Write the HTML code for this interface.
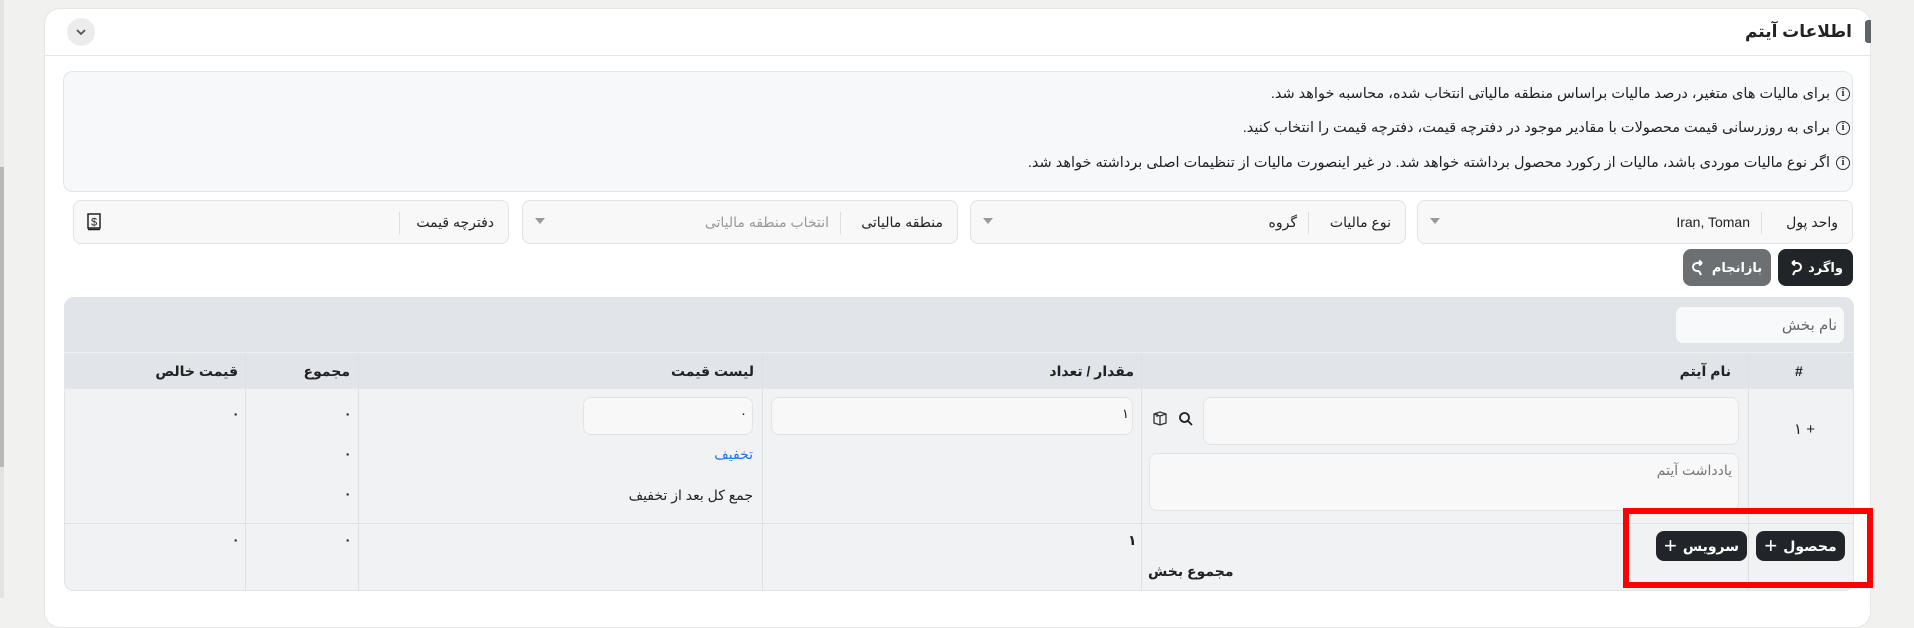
<!DOCTYPE html>
<html><head><meta charset="utf-8"><style>
*{box-sizing:border-box;margin:0;padding:0}
body{width:1914px;height:598px;background:#f1f1f0;font-family:"Liberation Sans","DejaVu Sans",sans-serif;color:#222;position:relative;overflow:hidden}
.a{position:absolute}
.card{left:44px;top:8px;width:1827px;height:620px;background:#fff;border-radius:16px;border:1px solid #e6e6e6}
.txt{direction:rtl;white-space:nowrap;font-size:14px}
.sel{position:absolute;top:200px;height:44px;background:#f8f8f8;border:1px solid #e2e2e2;border-radius:8px}
.sel .l{position:absolute;right:14px;top:13px;font-size:14px;direction:rtl;white-space:nowrap}
.sel .sep{position:absolute;top:11px;width:1px;height:22px;background:#ddd}
.sel .v{position:absolute;top:13px;font-size:14px;direction:rtl;white-space:nowrap}
.arr{position:absolute;left:12px;top:17px;width:0;height:0;border-left:5px solid transparent;border-right:5px solid transparent;border-top:6px solid #999}
.inp{position:absolute;background:#f8f8f8;border:1px solid #e3e3e3;border-radius:8px}
.hd{position:absolute;top:353px;height:36px;font-size:14px;font-weight:bold;direction:rtl;white-space:nowrap;line-height:36px}
.vl{position:absolute;width:1px;background:#dde0e4}
.btn{position:absolute;border-radius:8px;color:#fff;font-size:13px;font-weight:bold;direction:rtl;white-space:nowrap;display:flex;align-items:center;justify-content:center;gap:6px}
.info{position:absolute;right:64px;font-size:14.5px;direction:rtl;white-space:nowrap;display:flex;align-items:center;gap:6px}
.ic{width:14px;height:14px;border:1.3px solid #333;border-radius:50%;font-size:10px;line-height:12px;text-align:center;font-family:"Liberation Serif",serif;font-weight:bold}
</style></head><body>
<div class="a" style="left:0;top:0;width:4px;height:598px;background:#e4e4e4"></div>
<div class="a" style="left:0;top:167px;width:4px;height:300px;background:#b8b8b8"></div>
<div class="a card"></div>
<div class="a" style="left:44px;top:55px;width:1827px;height:1px;background:#e5e5e5"></div>
<div class="a" style="left:1865px;top:20px;width:6px;height:23px;background:#5f6466;border-radius:3px 0 0 3px"></div>
<div class="a txt" style="right:62px;top:22px;font-size:17px;font-weight:bold">اطلاعات آیتم</div>
<div class="a" style="left:67px;top:18px;width:28px;height:28px;border-radius:50%;background:#ececec"></div>
<svg class="a" style="left:74px;top:26px" width="14" height="12" viewBox="0 0 14 12"><path d="M3 4l4 4 4-4" stroke="#555" stroke-width="1.8" fill="none"/></svg>

<div class="a" style="left:63px;top:71px;width:1790px;height:121px;background:#f7f8f9;border:1px solid #e3e5e8;border-radius:10px"></div>
<div class="info" style="top:86px"><span class="ic">i</span><span>برای مالیات های متغیر، درصد مالیات براساس منطقه مالیاتی انتخاب شده، محاسبه خواهد شد.</span></div>
<div class="info" style="top:120px"><span class="ic">i</span><span>برای به روزرسانی قیمت محصولات با مقادیر موجود در دفترچه قیمت، دفترچه قیمت را انتخاب کنید.</span></div>
<div class="info" style="top:155px"><span class="ic">i</span><span>اگر نوع مالیات موردی باشد، مالیات از رکورد محصول برداشته خواهد شد. در غیر اینصورت مالیات از تنظیمات اصلی برداشته خواهد شد.</span></div>

<div class="sel" style="left:1417px;width:436px"><span class="l">واحد پول</span><span class="sep" style="right:90px"></span><span class="v" style="right:102px;font-family:'Liberation Sans',sans-serif">Iran, Toman</span><span class="arr"></span></div>
<div class="sel" style="left:970px;width:436px"><span class="l">نوع مالیات</span><span class="sep" style="right:96px"></span><span class="v" style="right:108px">گروه</span><span class="arr"></span></div>
<div class="sel" style="left:522px;width:436px"><span class="l">منطقه مالیاتی</span><span class="sep" style="right:116px"></span><span class="v" style="right:128px;color:#999">انتخاب منطقه مالیاتی</span><span class="arr"></span></div>
<div class="sel" style="left:73px;width:436px"><span class="l">دفترچه قیمت</span><span class="sep" style="right:108px"></span>
<svg style="position:absolute;left:13px;top:12px" width="14" height="18" viewBox="0 0 14 18"><rect x="1" y="1" width="12" height="14" fill="none" stroke="#222" stroke-width="1.5"/><line x1="1" y1="16.5" x2="13" y2="16.5" stroke="#222" stroke-width="1.5"/><text x="7" y="12.5" font-size="11" text-anchor="middle" font-family="Liberation Sans" fill="#222">$</text></svg></div>

<div class="btn" style="left:1778px;top:249px;width:75px;height:37px;background:#212529">واگرد <svg width="14" height="16" viewBox="0 0 14 16"><path d="M4 3h5a4 4 0 0 1 0 8H7M4 3l3-2.5M4 3l3 2.5M7 11l-2 4" stroke="#fff" stroke-width="2" fill="none"/></svg></div>
<div class="btn" style="left:1683px;top:249px;width:88px;height:37px;background:#6c7073">بازانجام <svg width="14" height="16" viewBox="0 0 14 16"><path d="M10 3H5a4 4 0 0 0 0 8h2M10 3L7 .5M10 3L7 5.5M7 11l2 4" stroke="#fff" stroke-width="2" fill="none"/></svg></div>

<div class="a" style="left:64px;top:297px;width:1790px;height:294px;background:#f0f2f4;border-radius:10px;border:1px solid #e0e3e7"></div>
<div class="a" style="left:64px;top:297px;width:1790px;height:92px;background:#e1e4e8;border-radius:10px 10px 0 0"></div>
<div class="a" style="left:64px;top:352px;width:1790px;height:1px;background:#eef0f2"></div>
<div class="inp" style="left:1675px;top:306px;width:170px;height:38px;background:#f8f9fa"></div>
<div class="a txt" style="right:77px;top:316px;color:#666;font-size:15px">نام بخش</div>

<div class="vl" style="left:1748px;top:353px;height:238px"></div>
<div class="vl" style="left:1141px;top:353px;height:238px"></div>
<div class="vl" style="left:762px;top:353px;height:238px"></div>
<div class="vl" style="left:358px;top:353px;height:238px"></div>
<div class="vl" style="left:245px;top:353px;height:238px"></div>
<div class="a" style="left:64px;top:523px;width:1790px;height:1px;background:#dde0e4"></div>

<div class="hd" style="left:1795px">#</div>
<div class="hd" style="right:183px">نام آیتم</div>
<div class="hd" style="right:780px">مقدار / تعداد</div>
<div class="hd" style="right:1160px">لیست قیمت</div>
<div class="hd" style="right:1564px">مجموع</div>
<div class="hd" style="right:1676px">قیمت خالص</div>

<div class="a txt" style="left:1794px;top:420px;font-size:15px">+ ١</div>
<div class="inp" style="left:1203px;top:397px;width:536px;height:48px"></div>
<div class="inp" style="left:1149px;top:453px;width:590px;height:58px"></div>
<div class="a txt" style="right:182px;top:462px;color:#777;font-size:14px">یادداشت آیتم</div>
<svg class="a" style="left:1152px;top:410px" width="16" height="16" viewBox="0 0 16 16"><path d="M2 4l6-2 6 2v9l-6 2-6-2z M2 4l6 2 6-2 M8 6v9 M5 3v4" stroke="#333" stroke-width="1.3" fill="none"/></svg>
<svg class="a" style="left:1178px;top:411px" width="16" height="16" viewBox="0 0 16 16"><circle cx="6.5" cy="6.5" r="4.5" stroke="#222" stroke-width="1.8" fill="none"/><path d="M10 10l4 4" stroke="#222" stroke-width="1.8"/></svg>

<div class="inp" style="left:771px;top:397px;width:362px;height:38px"></div>
<div class="a txt" style="left:1122px;top:406px;font-size:13px">١</div>
<div class="inp" style="left:583px;top:397px;width:170px;height:38px"></div>
<div class="a txt" style="left:740px;top:406px;font-size:13px">٠</div>
<div class="a txt" style="right:1161px;top:446px;color:#1a73e8;font-size:14px">تخفیف</div>
<div class="a txt" style="right:1161px;top:487px;font-size:14px">جمع کل بعد از تخفیف</div>
<div class="a txt" style="left:344px;top:407px;font-size:12px;font-weight:bold">٠</div>
<div class="a txt" style="left:344px;top:447px;font-size:12px;font-weight:bold">٠</div>
<div class="a txt" style="left:344px;top:487px;font-size:12px;font-weight:bold">٠</div>
<div class="a txt" style="left:232px;top:407px;font-size:12px;font-weight:bold">٠</div>
<div class="a txt" style="left:1128px;top:532px;font-size:14px;font-weight:bold">١</div>
<div class="a txt" style="left:344px;top:533px;font-size:12px;font-weight:bold">٠</div>
<div class="a txt" style="left:232px;top:533px;font-size:12px;font-weight:bold">٠</div>
<div class="a txt" style="left:1148px;top:563px;font-size:14px;font-weight:bold">مجموع بخش</div>

<div class="btn" style="left:1756px;top:531px;width:89px;height:30px;background:#212529;font-size:14px">محصول <span style="font-size:22px;font-weight:normal">+</span></div>
<div class="btn" style="left:1656px;top:531px;width:91px;height:30px;background:#212529;font-size:14px">سرویس <span style="font-size:22px;font-weight:normal">+</span></div>
<div class="a" style="left:1623px;top:508px;width:250px;height:80px;border:6px solid #ff0000"></div>
</body></html>
